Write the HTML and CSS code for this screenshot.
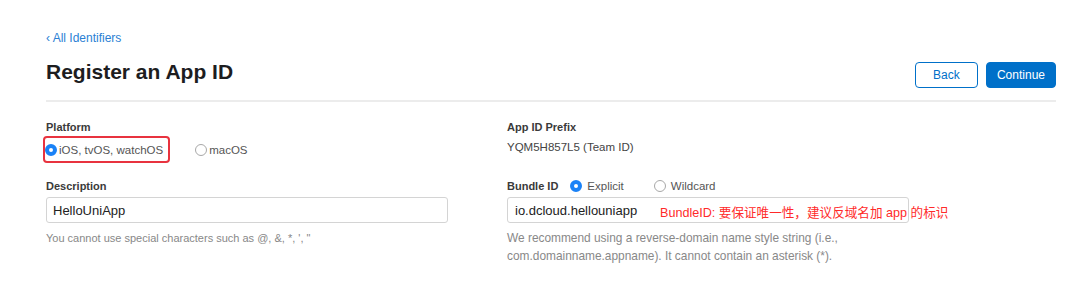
FILE: index.html
```html
<!DOCTYPE html>
<html lang="en">
<head>
  <meta charset="UTF-8" />
  <title>Register an App ID</title>
  <link rel="stylesheet" href="styles.css">
</head>
<body>
  <div class="page">
    <a href="#" class="back-link">&lsaquo; All Identifiers</a>

    <div class="header">
      <h1>Register an App ID</h1>
      <div class="actions">
        <button class="btn btn-outline">Back</button>
        <button class="btn btn-primary">Continue</button>
      </div>
    </div>

    <div class="divider"></div>

    <div class="form-grid">
      <div class="field">
        <div class="label">Platform</div>
        <div class="radio-row">
          <label class="radio marked"><input type="radio" name="platform" checked> iOS, tvOS, watchOS</label>
          <label class="radio"><input type="radio" name="platform"> macOS</label>
        </div>
      </div>

      <div class="field">
        <div class="label">App ID Prefix</div>
        <div class="value">YQM5H857L5 (Team ID)</div>
      </div>

      <div class="field">
        <div class="label">Description</div>
        <input type="text" class="text-input" value="HelloUniApp">
        <p class="hint">You cannot use special characters such as @, &amp;, *, ', "</p>
      </div>

      <div class="field">
        <div class="label-row">
          <span class="label">Bundle ID</span>
          <label class="radio"><input type="radio" name="bundle" checked> Explicit</label>
          <label class="radio"><input type="radio" name="bundle"> Wildcard</label>
        </div>
        <div class="input-wrap">
          <input type="text" class="text-input" value="io.dcloud.hellouniapp">
          <span class="note">BundleID: 要保证唯一性，建议反域名加 app 的标识</span>
        </div>
        <p class="hint hint-wide">We recommend using a reverse-domain name style string (i.e.,<br>com.domainname.appname). It cannot contain an asterisk (*).</p>
      </div>
    </div>
  </div>
</body>
</html>
```

FILE: styles.css
```css
body {
  margin: 0;
  background: #ffffff;
  font-family: "Liberation Sans", Arial, "Noto Sans CJK SC", sans-serif;
  color: #333333;
}

.page {
  padding: 31px 31px 0 46px;
}

.back-link {
  display: block;
  font-size: 12px;
  line-height: 14px;
  color: #2b7fd4;
  text-decoration: none;
}

.header {
  display: flex;
  justify-content: space-between;
  align-items: flex-start;
  margin-top: 17px;
}

.header h1 {
  margin: 0;
  font-size: 21px;
  line-height: 20px;
  font-weight: 700;
  color: #1d1d1f;
}

.actions {
  display: flex;
  gap: 8px;
}

.btn {
  height: 26px;
  min-width: 63px;
  padding: 0 10px;
  border-radius: 4px;
  font-size: 12px;
  font-family: inherit;
  box-sizing: border-box;
  cursor: pointer;
}

.btn-outline {
  background: #ffffff;
  border: 1px solid #0070c9;
  color: #0070c9;
}

.btn-primary {
  background: #0070c9;
  border: 1px solid #0070c9;
  color: #ffffff;
}

.divider {
  height: 2px;
  background: #ececec;
  margin-top: 12px;
}

.form-grid {
  display: grid;
  grid-template-columns: 461px 1fr;
  row-gap: 16px;
  margin-top: 18px;
}

.label {
  font-size: 11px;
  line-height: 14px;
  font-weight: 700;
  color: #3a3a3a;
}

.value {
  margin-top: 6px;
  font-size: 11.5px;
  line-height: 14px;
  color: #444444;
}

.radio-row {
  display: flex;
  align-items: center;
  gap: 25px;
  margin-top: 2px;
}

.radio {
  display: inline-flex;
  align-items: center;
  font-size: 11.5px;
  line-height: 14px;
  color: #555555;
}

.radio input {
  appearance: none;
  -webkit-appearance: none;
  width: 12px;
  height: 12px;
  margin: 0 2px 0 0;
  border: 1px solid #a8a8a8;
  border-radius: 50%;
  background: #ffffff;
  box-sizing: border-box;
}

.radio input:checked {
  border: 4px solid #1a82f7;
  background: #ffffff;
}

.radio.marked {
  margin-left: -3px;
  height: 27px;
  padding: 0 5px 0 0;
  border: 2px solid #e8333f;
  border-radius: 4px;
  box-sizing: border-box;
}

.label-row {
  display: flex;
  align-items: center;
  height: 14px;
}

.label-row .label {
  margin-right: 12px;
}

.label-row .radio + .radio {
  margin-left: 30px;
}

.label-row .radio input {
  margin-right: 5px;
}

.text-input {
  display: block;
  width: 402px;
  height: 26px;
  margin-top: 4px;
  padding: 0 7px;
  border: 1px solid #d4d4d4;
  border-radius: 3px;
  font-size: 13px;
  font-family: inherit;
  color: #222222;
  box-sizing: border-box;
}

.field > .text-input {
  padding-left: 6px;
}

.input-wrap {
  position: relative;
}

.note {
  position: absolute;
  left: 153px;
  top: 3px;
  height: 26px;
  line-height: 26px;
  font-size: 12.6px;
  color: #ff2a2a;
  white-space: nowrap;
}

.hint {
  margin: 6px 0 0;
  font-size: 11px;
  line-height: 18px;
  color: #888888;
}

.hint-wide {
  font-size: 11.9px;
}
```
